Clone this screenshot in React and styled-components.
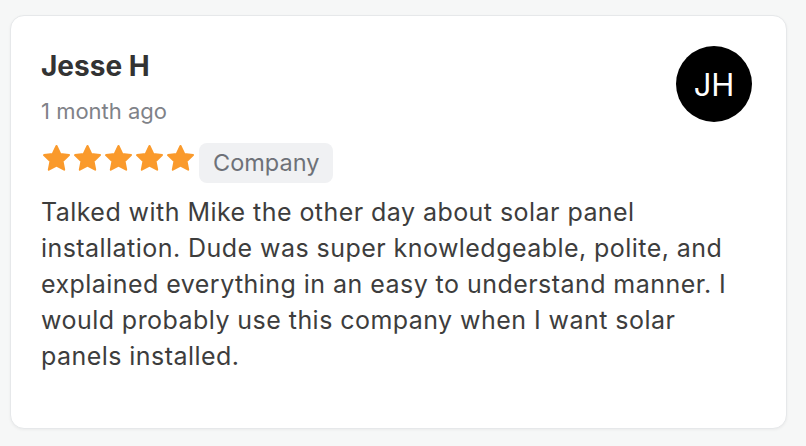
import styled, { createGlobalStyle } from "styled-components";

const GlobalStyle = createGlobalStyle`
  * { box-sizing: border-box; }
  body {
    margin: 0;
    background: #f6f7f7;
    font-family: Inter, "Noto Sans", sans-serif;
  }
`;

const Page = styled.div`
  padding: 15px 19px 17px 10px;
`;

const Card = styled.div`
  background: #fff;
  border: 1px solid #e6e8ea;
  border-radius: 14px;
  box-shadow: 0 1px 3px rgba(0, 0, 0, 0.05);
  padding: 33px 34px 40px 30px;
  min-height: 414px;
`;

const Top = styled.div`
  display: flex;
  justify-content: space-between;
  align-items: flex-start;
`;

const Name = styled.div`
  font-size: 28px;
  font-weight: 700;
  color: #333;
  line-height: 34px;
`;

const Time = styled.div`
  font-size: 22px;
  color: #7f8288;
  margin-top: 14px;
  line-height: 28px;
`;

const Avatar = styled.div`
  width: 76px;
  height: 76px;
  border-radius: 50%;
  background: #000;
  color: #fff;
  display: flex;
  align-items: center;
  justify-content: center;
  font-size: 31px;
  margin-top: -3px;
`;

const RatingRow = styled.div`
  display: flex;
  align-items: flex-start;
  margin-top: 18px;
`;

const Stars = styled.div`
  display: flex;
  margin-top: 1px;
`;

const Badge = styled.span`
  background: #f0f1f3;
  color: #6e7178;
  font-size: 23.5px;
  border-radius: 8px;
  padding: 6px 14px;
  margin-left: 3px;
  line-height: 28px;
`;

const Body = styled.p`
  margin: 11px 0 0;
  font-size: 25px;
  letter-spacing: 0.45px;
  line-height: 36px;
  color: #3d3d3d;
  max-width: 716px;
`;

const Star = () => (
  <svg width="31" height="29" viewBox="0 0 24 23">
    <path
      d="M12 1.6l3 6.3 6.9.9-5.1 4.8 1.3 6.8L12 17.1l-6.1 3.3 1.3-6.8-5.1-4.8 6.9-.9z"
      fill="#fa9a2c"
      stroke="#fa9a2c"
      strokeWidth="1.6"
      strokeLinejoin="round"
    />
  </svg>
);

export default function App() {
  return (
    <>
      <GlobalStyle />
      <Page>
        <Card>
          <Top>
            <div>
              <Name>Jesse H</Name>
              <Time>1 month ago</Time>
            </div>
            <Avatar>JH</Avatar>
          </Top>
          <RatingRow>
            <Stars>
              {[0, 1, 2, 3, 4].map((i) => (
                <Star key={i} />
              ))}
            </Stars>
            <Badge>Company</Badge>
          </RatingRow>
          <Body>
            Talked with Mike the other day about solar panel installation. Dude
            was super knowledgeable, polite, and explained everything in an easy
            to understand manner. I would probably use this company when I want
            solar panels installed.
          </Body>
        </Card>
      </Page>
    </>
  );
}
